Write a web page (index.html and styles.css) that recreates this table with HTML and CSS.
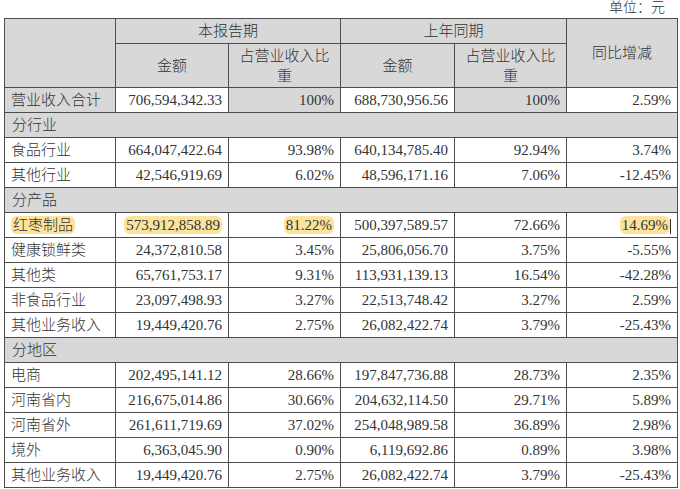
FILE: index.html
```html
<!DOCTYPE html>
<html lang="zh-CN">
<head>
<meta charset="utf-8">
<title>营业收入构成</title>
<link rel="stylesheet" href="styles.css">
</head>
<body>
<div class="page">
  <div class="unit">单位：元</div>
  <table class="report">
    <colgroup>
      <col class="c1"><col class="c2"><col class="c3"><col class="c4"><col class="c5"><col class="c6">
    </colgroup>
    <thead>
      <tr class="h1">
        <th class="gray" rowspan="2"></th>
        <th class="gray" colspan="2">本报告期</th>
        <th class="gray" colspan="2">上年同期</th>
        <th class="gray" rowspan="2">同比增减</th>
      </tr>
      <tr class="h2">
        <th class="gray">金额</th>
        <th class="gray">占营业收入比<br>重</th>
        <th class="gray">金额</th>
        <th class="gray">占营业收入比<br>重</th>
      </tr>
    </thead>
    <tbody>
      <tr>
        <td class="name gray">营业收入合计</td>
        <td class="num">706,594,342.33</td>
        <td class="num gray">100%</td>
        <td class="num">688,730,956.56</td>
        <td class="num gray">100%</td>
        <td class="num">2.59%</td>
      </tr>
      <tr class="section"><td colspan="6">分行业</td></tr>
      <tr>
        <td class="name">食品行业</td>
        <td class="num">664,047,422.64</td>
        <td class="num">93.98%</td>
        <td class="num">640,134,785.40</td>
        <td class="num">92.94%</td>
        <td class="num">3.74%</td>
      </tr>
      <tr>
        <td class="name">其他行业</td>
        <td class="num">42,546,919.69</td>
        <td class="num">6.02%</td>
        <td class="num">48,596,171.16</td>
        <td class="num">7.06%</td>
        <td class="num">-12.45%</td>
      </tr>
      <tr class="section"><td colspan="6">分产品</td></tr>
      <tr>
        <td class="name"><span class="mark">红枣制品</span></td>
        <td class="num"><span class="mark">573,912,858.89</span></td>
        <td class="num"><span class="mark">81.22%</span></td>
        <td class="num">500,397,589.57</td>
        <td class="num">72.66%</td>
        <td class="num"><span class="mark">14.69%</span><span class="caret"></span></td>
      </tr>
      <tr>
        <td class="name">健康锁鲜类</td>
        <td class="num">24,372,810.58</td>
        <td class="num">3.45%</td>
        <td class="num">25,806,056.70</td>
        <td class="num">3.75%</td>
        <td class="num">-5.55%</td>
      </tr>
      <tr>
        <td class="name">其他类</td>
        <td class="num">65,761,753.17</td>
        <td class="num">9.31%</td>
        <td class="num">113,931,139.13</td>
        <td class="num">16.54%</td>
        <td class="num">-42.28%</td>
      </tr>
      <tr>
        <td class="name">非食品行业</td>
        <td class="num">23,097,498.93</td>
        <td class="num">3.27%</td>
        <td class="num">22,513,748.42</td>
        <td class="num">3.27%</td>
        <td class="num">2.59%</td>
      </tr>
      <tr>
        <td class="name">其他业务收入</td>
        <td class="num">19,449,420.76</td>
        <td class="num">2.75%</td>
        <td class="num">26,082,422.74</td>
        <td class="num">3.79%</td>
        <td class="num">-25.43%</td>
      </tr>
      <tr class="section"><td colspan="6">分地区</td></tr>
      <tr>
        <td class="name">电商</td>
        <td class="num">202,495,141.12</td>
        <td class="num">28.66%</td>
        <td class="num">197,847,736.88</td>
        <td class="num">28.73%</td>
        <td class="num">2.35%</td>
      </tr>
      <tr>
        <td class="name">河南省内</td>
        <td class="num">216,675,014.86</td>
        <td class="num">30.66%</td>
        <td class="num">204,632,114.50</td>
        <td class="num">29.71%</td>
        <td class="num">5.89%</td>
      </tr>
      <tr>
        <td class="name">河南省外</td>
        <td class="num">261,611,719.69</td>
        <td class="num">37.02%</td>
        <td class="num">254,048,989.58</td>
        <td class="num">36.89%</td>
        <td class="num">2.98%</td>
      </tr>
      <tr>
        <td class="name">境外</td>
        <td class="num">6,363,045.90</td>
        <td class="num">0.90%</td>
        <td class="num">6,119,692.86</td>
        <td class="num">0.89%</td>
        <td class="num">3.98%</td>
      </tr>
      <tr>
        <td class="name">其他业务收入</td>
        <td class="num">19,449,420.76</td>
        <td class="num">2.75%</td>
        <td class="num">26,082,422.74</td>
        <td class="num">3.79%</td>
        <td class="num">-25.43%</td>
      </tr>
    </tbody>
  </table>
</div>
</body>
</html>
```

FILE: styles.css
```css
html, body {
  margin: 0;
  padding: 0;
  background: #ffffff;
}

.page {
  padding: 0 3px 0 4px;
  font-family: "Liberation Serif", "Noto Sans CJK SC", serif;
  color: #333333;
  font-size: 15px;
  font-weight: 300;
}

.unit {
  height: 18px;
  line-height: 15px;
  padding-top: 0;
  text-align: right;
  padding-right: 12px;
  font-size: 14px;
}

.report {
  width: 673px;
  border-collapse: collapse;
  table-layout: fixed;
}

.c1 { width: 111px; }
.c2 { width: 113px; }
.c3 { width: 112px; }
.c4 { width: 114px; }
.c5 { width: 112px; }
.c6 { width: 111px; }

.report th,
.report td {
  border: 1px solid #4d4d4d;
  padding: 0 6px;
  font-weight: 300;
  white-space: nowrap;
}

.report th {
  text-align: center;
  line-height: 20px;
}

.h1 th { height: 24px; }
.h2 th { height: 43px; }

.report td {
  height: 24px;
  line-height: 20px;
}

.gray {
  background: #d8d8d8;
}

.name {
  text-align: left;
  padding-left: 7px;
}

.num {
  text-align: right;
}

.section td {
  background: #d8d8d8;
  text-align: left;
  padding-left: 7px;
}

.mark {
  background: #fbe39d;
  border-radius: 6px;
  padding: 1px 2px;
}

.caret {
  display: inline-block;
  width: 1px;
  height: 15px;
  background: #333333;
  vertical-align: middle;
}
```
